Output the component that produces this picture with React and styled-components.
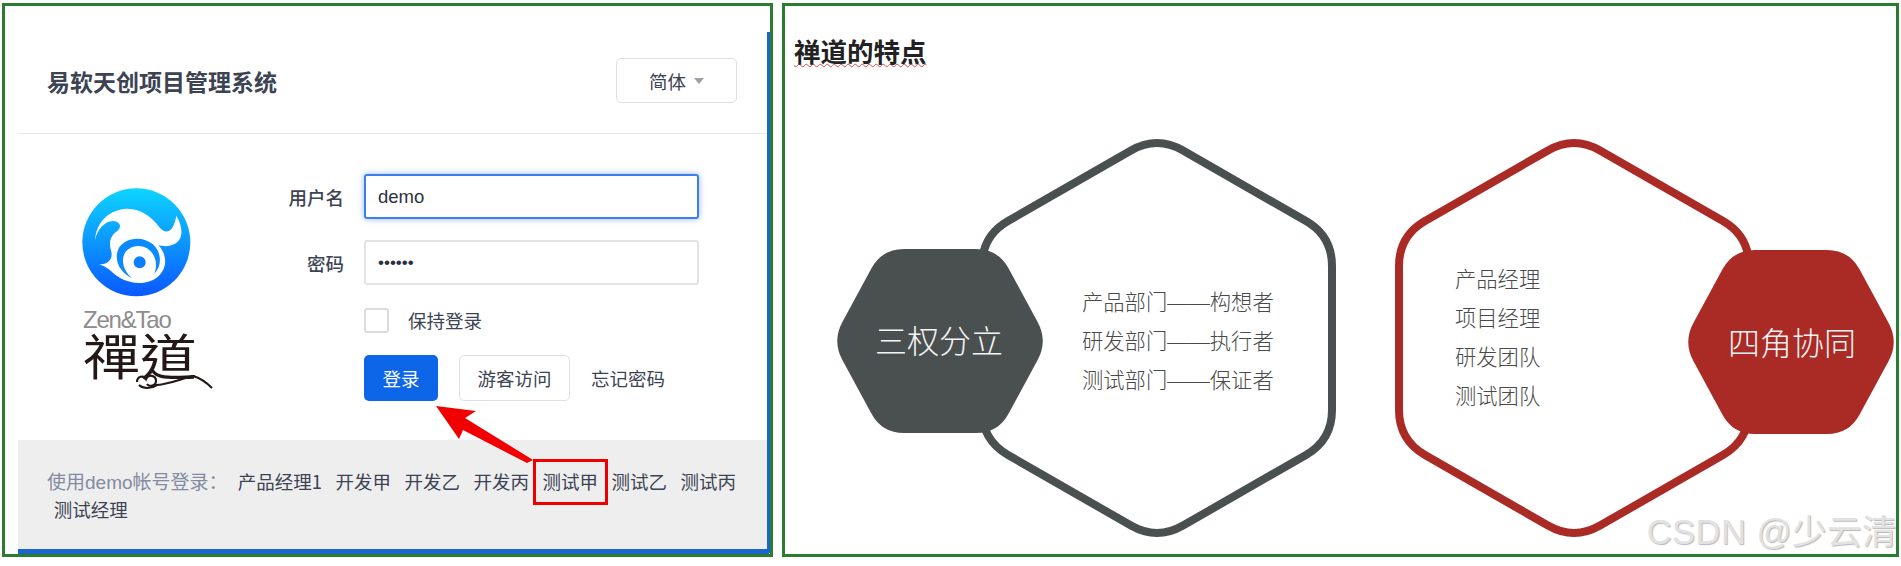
import React from "react";
import styled, { createGlobalStyle } from "styled-components";

const SANS = `"Noto Sans CJK SC", "Noto Sans", sans-serif`;
const LATIN_SANS = `"Liberation Sans", "Noto Sans CJK SC", sans-serif`;

const Global = createGlobalStyle`
  html, body { margin: 0; padding: 0; background: #fff; }
  body { font-family: ${SANS}; }
`;

// hexagon outline with the corners cut back and rounded
const roundedHex = (pts, cut) => {
  const n = pts.length;
  const toward = (a, b) => {
    const len = Math.hypot(b[0] - a[0], b[1] - a[1]);
    return [a[0] + ((b[0] - a[0]) * cut) / len, a[1] + ((b[1] - a[1]) * cut) / len];
  };
  let d = "";
  pts.forEach((p, i) => {
    const start = toward(p, pts[(i + n - 1) % n]);
    const end = toward(p, pts[(i + 1) % n]);
    d += `${i === 0 ? "M" : "L"}${start[0]} ${start[1]} Q${p[0]} ${p[1]} ${end[0]} ${end[1]} `;
  });
  return d + "Z";
};

const ringPath = (cx, cy) =>
  roundedHex(
    [
      [cx, cy - 202.5],
      [cx + 175, cy - 102],
      [cx + 175, cy + 102],
      [cx, cy + 202.5],
      [cx - 175, cy + 102],
      [cx - 175, cy - 102],
    ],
    30
  );

const badgePath = (cx, cy) =>
  roundedHex(
    [
      [cx - 108, cy],
      [cx - 58, cy - 92],
      [cx + 58, cy - 92],
      [cx + 108, cy],
      [cx + 58, cy + 92],
      [cx - 58, cy + 92],
    ],
    22
  );

const ACCOUNTS = ["产品经理1", "开发甲", "开发乙", "开发丙", "测试甲", "测试乙", "测试丙", "测试经理"];

const Logo = () => (
  <LogoBox>
    <svg width="120" height="120" viewBox="0 0 360 360">
      <defs>
        <linearGradient id="swirl" x1="0" y1="0" x2="0" y2="1">
          <stop offset="0" stopColor="#0ed4ff" />
          <stop offset="1" stopColor="#0a58ff" />
        </linearGradient>
      </defs>
      <circle cx="172" cy="172" r="162" fill="url(#swirl)" />
      <path
        fill="#fff"
        d="M48 165 C52 115 85 78 135 72 C185 68 215 95 240 125 C258 148 282 148 292 92 C312 125 315 165 285 178 C265 187 248 183 238 180 C262 205 268 245 240 272 C205 305 140 300 100 262 C88 250 72 240 55 238 C85 240 102 225 97 200 C88 172 95 152 112 140 C130 128 125 110 103 108 C75 108 55 135 48 165 Z"
      />
      <path
        fill="#0a8aff"
        d="M160 280 C122 262 104 225 118 192 C134 158 190 150 222 178 C250 205 248 245 226 266 C238 235 228 205 204 190 C172 172 132 190 132 226 C132 250 145 268 160 280 Z"
      />
      <circle cx="182" cy="232" r="18" fill="#0a80ff" />
    </svg>
    <LogoLatin>Zen&amp;Tao</LogoLatin>
    <LogoHan>禪道</LogoHan>
    <Flourish width="78" height="18" viewBox="0 0 78 18">
      <path
        d="M2 10 C2 4 9 3 11 7 C13 2 21 3 21 9 C21 14 14 15 12 12 M4 13 C8 17 16 17 22 13 C34 12 46 7 58 4 C65 6 72 11 77 16"
        fill="none"
        stroke="#231815"
        strokeWidth="2.2"
      />
    </Flourish>
  </LogoBox>
);

const App = () => (
  <Page>
    <Global />
    <LoginFrame>
      <Card>
        <CardHeader>
          <CardTitle>易软天创项目管理系统</CardTitle>
          <LangButton>
            简体
            <Caret />
          </LangButton>
        </CardHeader>
        <CardBody>
          <Logo />
          <Form>
            <FieldRow>
              <FieldLabel>用户名</FieldLabel>
              <TextInput $focus type="text" value="demo" readOnly />
            </FieldRow>
            <FieldRow>
              <FieldLabel>密码</FieldLabel>
              <TextInput $secret type="password" value="123456" readOnly />
            </FieldRow>
            <KeepRow>
              <CheckBox />
              <KeepText>保持登录</KeepText>
            </KeepRow>
            <ActionRow>
              <Button $primary>登录</Button>
              <Button>游客访问</Button>
              <ForgotLink>忘记密码</ForgotLink>
            </ActionRow>
          </Form>
        </CardBody>
        <Footer>
          <FooterLabel>使用demo帐号登录：</FooterLabel>
          {ACCOUNTS.map((name) => (
            <AccountLink key={name} $marked={name === "测试甲"}>
              {name}
            </AccountLink>
          ))}
        </Footer>
      </Card>
      <Arrow width="106" height="62" viewBox="431 403 106 62">
        <polygon
          fill="#f00000"
          points="436,406 476,411 465,418 533,460 527,463 463,430 459,439"
        />
      </Arrow>
    </LoginFrame>

    <FeatureFrame>
      <FeatureTitle>禅道的特点</FeatureTitle>
      <DiagramRow>
        <Diagram $width={498}>
          <DiagramArt width="498" height="404" viewBox="0 0 498 404">
            <path d={ringPath(320, 203)} fill="#fff" stroke="#4a5050" strokeWidth="8" />
            <path d={badgePath(103, 206)} fill="#4a5050" />
          </DiagramArt>
          <BadgeLabel $center={102} $top={183}>三权分立</BadgeLabel>
          <RoleList $left={245} $top={145.5}>
            <li>产品部门<Dash>——</Dash>构想者</li>
            <li>研发部门<Dash>——</Dash>执行者</li>
            <li>测试部门<Dash>——</Dash>保证者</li>
          </RoleList>
        </Diagram>
        <Diagram $width={500}>
          <DiagramArt width="500" height="404" viewBox="0 0 500 404">
            <path d={ringPath(179, 203)} fill="#fff" stroke="#aa2a26" strokeWidth="8" />
            <path d={badgePath(396, 207)} fill="#aa2a26" />
          </DiagramArt>
          <BadgeLabel $center={397} $top={185}>四角协同</BadgeLabel>
          <RoleList $left={60} $top={122.5}>
            <li>产品经理</li>
            <li>项目经理</li>
            <li>研发团队</li>
            <li>测试团队</li>
          </RoleList>
        </Diagram>
      </DiagramRow>
      <Watermark>CSDN @少云清</Watermark>
    </FeatureFrame>
  </Page>
);

const Page = styled.div`
  display: flex;
  gap: 9px;
  width: 1901px;
  height: 566px;
  padding: 3px 2px 0;
  box-sizing: border-box;
  overflow: hidden;
  background: #fff;
`;
const LoginFrame = styled.div`
  position: relative;
  width: 771px;
  height: 554px;
  box-sizing: border-box;
  border: 3px solid #2a7d2e;
  padding: 26px 0 0 13px;
`;
const Card = styled.div`
  display: flex;
  flex-direction: column;
  height: 100%;
  box-sizing: border-box;
  border-right: 3px solid #1a66cc;
  border-bottom: 5px solid #1a66cc;
  border-bottom-right-radius: 3px;
`;
const CardHeader = styled.div`
  display: flex;
  align-items: center;
  justify-content: space-between;
  height: 102px;
  flex: none;
  box-sizing: border-box;
  padding: 0 30px 4px 29px;
  border-bottom: 1px solid #e8e8ea;
`;
const CardTitle = styled.div`
  font-size: 23px;
  font-weight: 700;
  color: #3c4353;
`;
const LangButton = styled.div`
  display: flex;
  align-items: center;
  justify-content: center;
  gap: 8px;
  width: 121px;
  height: 45px;
  box-sizing: border-box;
  border: 1px solid #dcdfe6;
  border-radius: 5px;
  font-size: 18.5px;
  color: #3c4353;
`;
const Caret = styled.span`
  width: 0;
  height: 0;
  border-left: 5px solid transparent;
  border-right: 5px solid transparent;
  border-top: 6px solid #9a9fa8;
`;
const CardBody = styled.div`
  display: flex;
  flex: none;
  height: 306px;
`;
const LogoBox = styled.div`
  position: relative;
  display: flex;
  flex-direction: column;
  width: 270px;
  box-sizing: border-box;
  padding: 51px 0 0 61px;
`;
const LogoLatin = styled.div`
  margin: 3px 0 0 4px;
  font-family: "Liberation Sans", sans-serif;
  font-size: 24px;
  letter-spacing: -1.2px;
  line-height: 24px;
  color: #8c8c8c;
`;
const LogoHan = styled.div`
  margin: -2px 0 0 4px;
  font-family: "Noto Sans CJK TC", sans-serif;
  font-size: 57px;
  line-height: 56px;
  color: #231815;
  transform: scaleY(0.85);
  transform-origin: top left;
`;
const Flourish = styled.svg`
  position: absolute;
  left: 117px;
  top: 238px;
`;
const Form = styled.div`
  display: flex;
  flex-direction: column;
  padding-top: 40px;
`;
const FieldRow = styled.div`
  display: flex;
  align-items: center;
  gap: 20px;
  margin-bottom: 21px;
`;
const FieldLabel = styled.label`
  width: 56px;
  text-align: right;
  white-space: nowrap;
  font-size: 18.5px;
  font-weight: 500;
  color: #3c4353;
`;
const TextInput = styled.input`
  width: 335px;
  height: 45px;
  box-sizing: border-box;
  padding: 0 12px;
  border-radius: 3px;
  outline: none;
  color: #2b3040;
  border: ${(p) => (p.$focus ? "2px solid #3d7ff0" : "2px solid #e3e3e3")};
  box-shadow: ${(p) => (p.$focus ? "0 0 6px rgba(61, 127, 240, 0.55)" : "none")};
  font-family: ${LATIN_SANS};
  font-size: ${(p) => (p.$secret ? "17px" : "18.5px")};
`;
const KeepRow = styled.div`
  display: flex;
  align-items: center;
  gap: 19px;
  margin: 2px 0 22px 76px;
`;
const CheckBox = styled.span`
  width: 25px;
  height: 25px;
  box-sizing: border-box;
  border: 2px solid #dcdcdc;
  border-radius: 3px;
`;
const KeepText = styled.span`
  font-size: 18.5px;
  line-height: 25px;
  color: #3c4353;
`;
const ActionRow = styled.div`
  display: flex;
  align-items: center;
  margin-left: 76px;
`;
const Button = styled.div`
  display: flex;
  align-items: center;
  justify-content: center;
  height: 46px;
  box-sizing: border-box;
  border-radius: 5px;
  font-size: 18.5px;
  width: ${(p) => (p.$primary ? "74px" : "111px")};
  margin-right: 21px;
  color: ${(p) => (p.$primary ? "#fff" : "#3c4353")};
  background: ${(p) => (p.$primary ? "#0d66e8" : "#fff")};
  border: ${(p) => (p.$primary ? "none" : "1px solid #dcdfe6")};
`;
const ForgotLink = styled.span`
  font-size: 18.5px;
  color: #3c4353;
`;
const Footer = styled.div`
  flex: 1;
  box-sizing: border-box;
  padding: 28px 14px 0 29px;
  background: #eeeeee;
  line-height: 26px;
`;
const FooterLabel = styled.span`
  display: inline-block;
  width: 184px;
  font-family: ${LATIN_SANS};
  font-size: 19px;
  white-space: nowrap;
  color: #838ba0;
`;
const AccountLink = styled.span`
  position: relative;
  display: inline-block;
  padding: 0 6.75px;
  font-size: 18.5px;
  color: #3c4353;
  &::after {
    content: "";
    display: ${(p) => (p.$marked ? "block" : "none")};
    position: absolute;
    left: -3px;
    top: -9px;
    width: 75px;
    height: 46px;
    box-sizing: border-box;
    border: 3px solid #ee0000;
  }
`;
const Arrow = styled.svg`
  position: absolute;
  left: 426px;
  top: 397px;
`;
const FeatureFrame = styled.div`
  position: relative;
  width: 1117px;
  height: 554px;
  box-sizing: border-box;
  border: 3px solid #2a7d2e;
  padding: 28px 0 0 9px;
  overflow: hidden;
`;
const FeatureTitle = styled.div`
  height: 34px;
  width: fit-content;
  font-size: 26.5px;
  font-weight: 700;
  line-height: 34px;
  color: #222;
  text-decoration: underline wavy #e05050 1px;
  text-underline-offset: 1px;
`;
const DiagramRow = styled.div`
  display: flex;
  gap: 60px;
  margin: 67px 0 0 43px;
`;
const Diagram = styled.div`
  position: relative;
  width: ${(p) => p.$width}px;
  height: 404px;
`;
const DiagramArt = styled.svg`
  display: block;
  overflow: visible;
`;
const BadgeLabel = styled.div`
  position: absolute;
  top: ${(p) => p.$top}px;
  left: ${(p) => p.$center}px;
  transform: translateX(-50%);
  white-space: nowrap;
  font-size: 32px;
  font-weight: 300;
  line-height: 42px;
  color: #f4f4f4;
`;
const RoleList = styled.ul`
  position: absolute;
  left: ${(p) => p.$left}px;
  top: ${(p) => p.$top}px;
  margin: 0;
  padding: 0;
  list-style: none;
  white-space: nowrap;
  font-size: 21.3px;
  font-weight: 300;
  line-height: 39.2px;
  color: #4a4a4a;
`;
const Dash = styled.span`
  font-family: "Liberation Serif", serif;
  line-height: 0;
`;
const Watermark = styled.div`
  position: absolute;
  right: -1px;
  bottom: 0;
  white-space: nowrap;
  font-family: "Liberation Sans", "Noto Sans CJK SC", sans-serif;
  font-size: 34.5px;
  letter-spacing: 0.5px;
  line-height: 44px;
  color: #e2e2e2;
  text-shadow: 1px 1px 1px #b8b8b8;
`;

export default App;
